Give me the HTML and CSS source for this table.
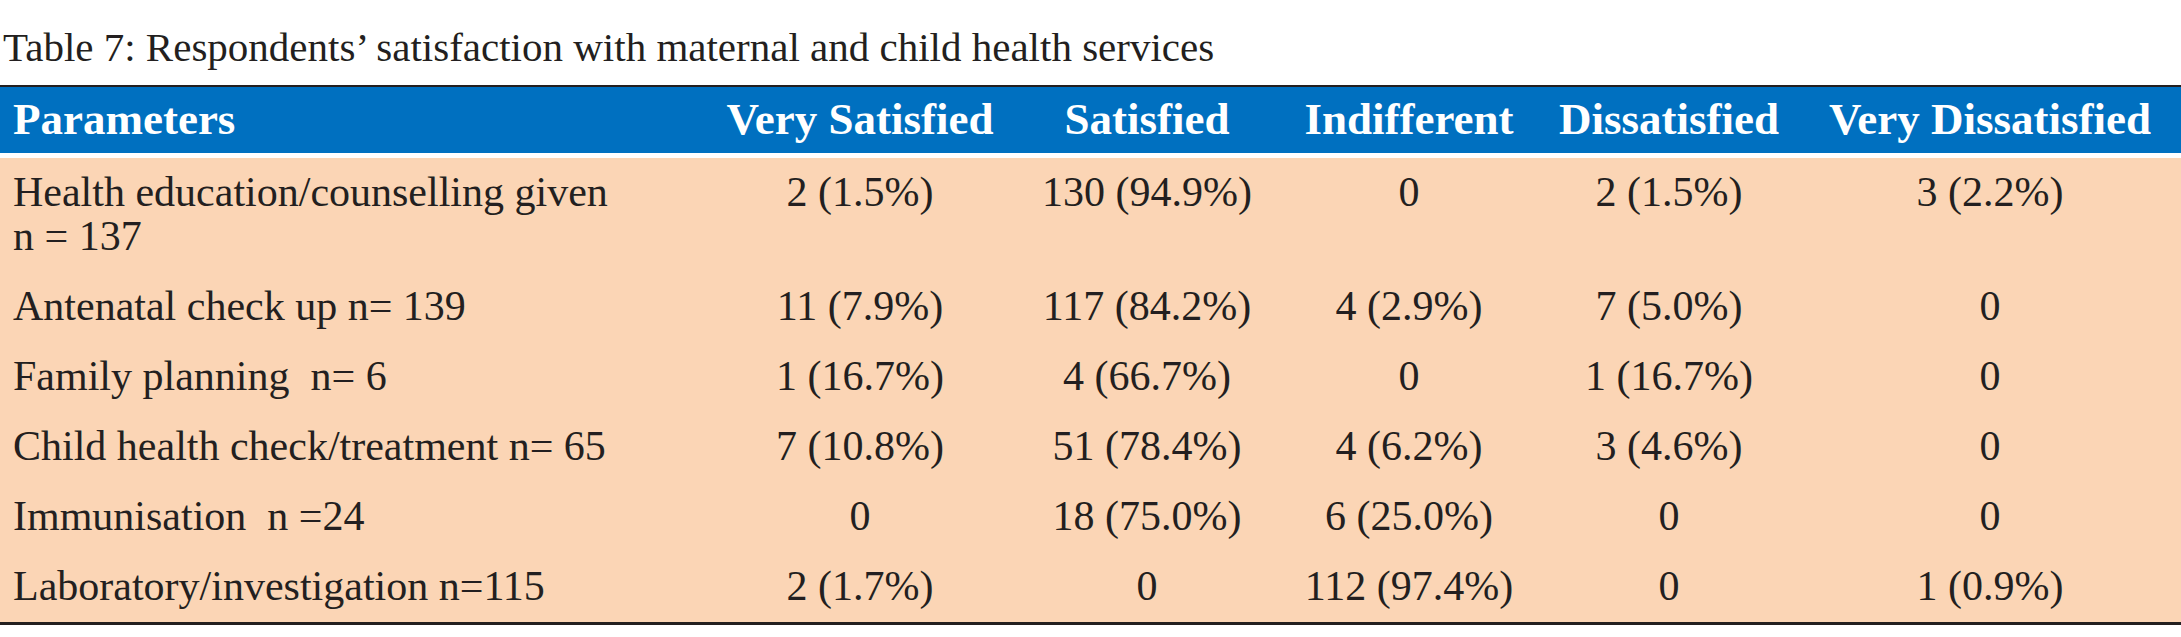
FILE: index.html
```html
<!DOCTYPE html>
<html lang="en">
<head>
<meta charset="utf-8">
<title>Table 7</title>
<link rel="stylesheet" href="styles.css">
</head>
<body>
<p class="caption">Table 7: Respondents’ satisfaction with maternal and child health services</p>
<table class="data">
  <colgroup>
    <col class="c-param">
    <col class="c-vs">
    <col class="c-s">
    <col class="c-i">
    <col class="c-d">
    <col class="c-vd">
  </colgroup>
  <thead>
    <tr>
      <th class="param">Parameters</th>
      <th>Very Satisfied</th>
      <th>Satisfied</th>
      <th>Indifferent</th>
      <th>Dissatisfied</th>
      <th>Very Dissatisfied</th>
    </tr>
  </thead>
  <tbody>
    <tr>
      <td class="param">Health education/counselling given<br>n = 137</td>
      <td>2 (1.5%)</td>
      <td>130 (94.9%)</td>
      <td>0</td>
      <td>2 (1.5%)</td>
      <td>3 (2.2%)</td>
    </tr>
    <tr>
      <td class="param">Antenatal check up n= 139</td>
      <td>11 (7.9%)</td>
      <td>117 (84.2%)</td>
      <td>4 (2.9%)</td>
      <td>7 (5.0%)</td>
      <td>0</td>
    </tr>
    <tr>
      <td class="param">Family planning&nbsp; n= 6</td>
      <td>1 (16.7%)</td>
      <td>4 (66.7%)</td>
      <td>0</td>
      <td>1 (16.7%)</td>
      <td>0</td>
    </tr>
    <tr>
      <td class="param">Child health check/treatment n= 65</td>
      <td>7 (10.8%)</td>
      <td>51 (78.4%)</td>
      <td>4 (6.2%)</td>
      <td>3 (4.6%)</td>
      <td>0</td>
    </tr>
    <tr>
      <td class="param">Immunisation&nbsp; n =24</td>
      <td>0</td>
      <td>18 (75.0%)</td>
      <td>6 (25.0%)</td>
      <td>0</td>
      <td>0</td>
    </tr>
    <tr class="last">
      <td class="param">Laboratory/investigation n=115</td>
      <td>2 (1.7%)</td>
      <td>0</td>
      <td>112 (97.4%)</td>
      <td>0</td>
      <td>1 (0.9%)</td>
    </tr>
  </tbody>
</table>
</body>
</html>
```

FILE: styles.css
```css
html, body {
  margin: 0;
  padding: 0;
  background: #ffffff;
}

body {
  font-family: "Liberation Serif", "Times New Roman", serif;
  color: #231f20;
  width: 2181px;
}

.caption {
  margin: 0 0 14px 0;
  padding: 24px 0 0 3px;
  font-size: 41px;
  line-height: 47px;
  color: #231f20;
}

.data {
  width: 2181px;
  table-layout: fixed;
  border-collapse: separate;
  border-spacing: 0;
}

.c-param { width: 705px; }
.c-vs { width: 310px; }
.c-s { width: 264px; }
.c-i { width: 260px; }
.c-d { width: 260px; }
.c-vd { width: 382px; }

.data th {
  background: #0070c0;
  color: #ffffff;
  font-weight: bold;
  font-size: 45px;
  line-height: 50px;
  padding: 7px 0 9px 0;
  text-align: center;
  border-top: 2px solid #231f20;
  border-bottom: 5px solid #ffffff;
  white-space: nowrap;
}

.data td {
  background: #fbd5b5;
  font-size: 42px;
  line-height: 44px;
  padding: 12px 0 14px 0;
  text-align: center;
  vertical-align: top;
  white-space: nowrap;
}

.data .param {
  text-align: left;
  padding-left: 13px;
}

.data tr.last td {
  border-bottom: 3px solid #231f20;
}
```
